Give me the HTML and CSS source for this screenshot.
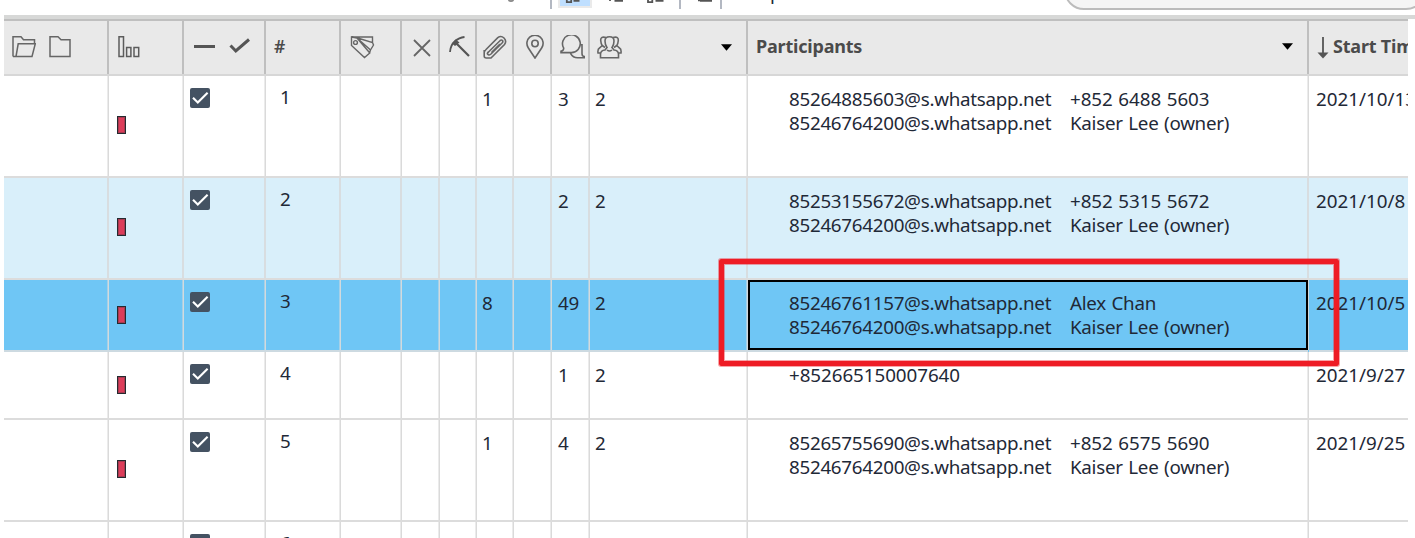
FILE: index.html
```html
<!DOCTYPE html>
<html lang="en">
<head>
<meta charset="utf-8">
<title>Chats</title>
<link rel="stylesheet" href="styles.css">
</head>
<body>
<svg class="defs" width="0" height="0">
  <symbol id="check" viewBox="0 0 20 20"><rect width="20" height="20" rx="2" fill="#445262"/><path d="M3 9.8 7.8 14.6 17.6 4.8" fill="none" stroke="#fff" stroke-width="2.1"/></symbol>
  <symbol id="caret" viewBox="0 0 11 7"><path d="M0 .3H11L5.5 6.8Z" fill="#000"/></symbol>
</svg>
<div class="window">
  <div class="toolbar">
    <svg class="tools" width="290" height="10" viewBox="490 0 290 10" fill="none" stroke="#555" stroke-width="1.8">
      <path d="M508.500 0Q511 2.200 513.500 0" stroke="#888"/>
      <path d="M551 0V9M680 0V9M721 0V9" stroke="#b3b8c2" stroke-width="2"/>
      <path d="M558 0H592V8H558Z" fill="#eaeaea" stroke="none"/>
      <path d="M560 0H590V6H560Z" fill="#bfdfff" stroke="none"/>
      <path d="M566.800 -1V2.200H571.200V-1M573.500 .9H579.500"/>
      <path d="M610 0V1M614.500 .9H623"/>
      <path d="M648 -1V2.200H652.300V-1M655.500 .9H663.500"/>
      <path d="M698 .3H702M700 .9H712" />
    </svg>
    <span class="tool-text">p</span>
    <div class="search"></div>
  </div>
  <div class="band"></div>
  <div class="table">
    <div class="row head">
      <div class="cell folders">
        <svg width="24" height="22" viewBox="0 0 24 22" fill="none" stroke="#666" stroke-width="1.500"><path d="M1 20.500V.8H9L11.500 3.700H22.500V8M1 20.500H20L23.300 7.800H6.200L4 20.500"/></svg>
        <svg width="22" height="22" viewBox="0 0 22 22" fill="none" stroke="#666" stroke-width="1.500"><path d="M1 .8H9L12 3.700H21V20.500H1Z"/></svg>
      </div>
      <div class="cell bars"><svg width="22" height="22" viewBox="0 0 22 22" fill="none" stroke="#5c5c5c" stroke-width="1.500"><path d="M1 .8H5.500V20.500H1ZM8.600 11.500H12.900V20.500H8.600ZM16 11.500H20.700V20.500H16Z"/></svg></div>
      <div class="cell marks"><svg width="56" height="16" viewBox="0 0 56 16" fill="none" stroke="#555" stroke-width="3"><path d="M0 8.500H21M36.500 7.500 41.800 13 55 1.500"/></svg></div>
      <div class="cell num">#</div>
      <div class="cell tag"><svg width="26" height="24" viewBox="0 0 26 24" fill="none" stroke="#666" stroke-width="1.400"><path d="M2.500 2H23.500V8M7 2.500 23.500 7.500 24.500 10 21.500 15M8 3 21.500 15 20.500 18M2.500 2V10.500L15.500 22.500 20.800 18 8 3Z"/><circle cx="6.500" cy="7.500" r="1.900"/></svg></div>
      <div class="cell cross"><svg width="18" height="18" viewBox="0 0 18 18" fill="none" stroke="#666" stroke-width="1.800"><path d="M1 1 17 17M17 1 1 17"/></svg></div>
      <div class="cell pick"><svg width="21" height="21" viewBox="0 0 21 21" fill="none" stroke="#555"><path d="M1 16Q1.500 9 6 5.300 10 1.500 15.500 1" stroke-width="1.800"/><path d="M5.500 5.500 20 20" stroke-width="2.200"/><path d="M3 7.500 6.500 3.200 10.500 6.500 6 10Z" fill="#555" stroke="none"/></svg></div>
      <div class="cell clip"><svg width="24" height="24" viewBox="0 0 24 24" fill="none" stroke="#666" stroke-width="1.600"><path d="M1.200 15V21Q1.200 23 3.300 23H8L21.500 9.500Q24 6 21 3 18 .2 14.800 2.600L3.500 14Q1 16.500 1.200 18M5.500 17 17.200 5.500Q18.500 4.500 19.500 5.500 20.300 6.600 19.300 7.700L8 19Q6 20.800 4.700 19.300 3.800 18.300 5.500 17ZM8.500 17.500 17 9"/></svg></div>
      <div class="cell pin"><svg width="18" height="24" viewBox="0 0 18 24" fill="none" stroke="#666" stroke-width="1.600"><path d="M9 23Q5 17 2.200 12.700A8.100 8.100 0 1 1 15.800 12.700Q13 17 9 23Z"/><circle cx="9" cy="8.500" r="3.200"/></svg></div>
      <div class="cell chat"><svg width="25" height="24" viewBox="0 0 25 24" fill="none" stroke="#666" stroke-width="1.600"><path d="M3.700 13.200A8.900 8.900 0 1 1 11.300 17.600H1V16.200Q3.700 15.500 3.700 13.200ZM19.600 9.800H22V18.500Q22 21.500 24.300 21.500V22.800H17.500Q13 22.800 10.500 18.300"/></svg></div>
      <div class="cell people"><svg width="25" height="24" viewBox="0 0 25 24" fill="none" stroke="#666" stroke-width="1.600"><path d="M8 6Q8 1.800 12.500 1.800T17 6Q17 10 15 12.500L17 15Q21.300 15.500 21.500 19V22.800H3.500V19Q3.700 15.500 8 15L10 12.500Q8 10 8 6ZM9 2.500Q3 1 3.800 6 4 9 5.200 10.500L2.500 13Q.5 14 1 18H3.500M16 2.500Q22 1 21.200 6 21 9 19.800 10.500L22.500 13Q24.500 14 24 18H21.500M10 15Q12.500 17 15 15M5.200 10.500 8 12.500M19.800 10.500 17 12.500"/></svg><svg class="caret" width="11" height="7"><use href="#caret"/></svg></div>
      <div class="cell parts"><span>Participants</span><svg class="caret" width="11" height="7"><use href="#caret"/></svg></div>
      <div class="cell time"><svg width="12" height="22" viewBox="0 0 12 22"><path d="M6 0V17" stroke="#555" stroke-width="1.800"/><path d="M.5 15.500H11.500L6 21.500Z" fill="#555"/></svg><span>Start Time</span></div>
    </div>

    <div class="row tall">
      <div class="cell"></div><div class="cell mark"><i></i></div><div class="cell box"><svg width="20" height="20"><use href="#check"/></svg></div><div class="cell num">1</div><div class="cell"></div><div class="cell"></div><div class="cell"></div><div class="cell n">1</div><div class="cell"></div><div class="cell c">3</div><div class="cell n">2</div>
      <div class="cell people-list"><span class="id">85264885603@s.whatsapp.net</span><span class="phone">+852 6488 5603</span><span class="id">85246764200@s.whatsapp.net</span><span class="name">Kaiser Lee (owner)</span></div>
      <div class="cell date">2021/10/13</div>
    </div>
    <div class="row tall alt">
      <div class="cell"></div><div class="cell mark"><i></i></div><div class="cell box"><svg width="20" height="20"><use href="#check"/></svg></div><div class="cell num">2</div><div class="cell"></div><div class="cell"></div><div class="cell"></div><div class="cell"></div><div class="cell"></div><div class="cell c">2</div><div class="cell n">2</div>
      <div class="cell people-list"><span class="id">85253155672@s.whatsapp.net</span><span class="phone">+852 5315 5672</span><span class="id">85246764200@s.whatsapp.net</span><span class="name">Kaiser Lee (owner)</span></div>
      <div class="cell date">2021/10/8</div>
    </div>
    <div class="row medium selected">
      <div class="cell"></div><div class="cell mark"><i></i></div><div class="cell box"><svg width="20" height="20"><use href="#check"/></svg></div><div class="cell num">3</div><div class="cell"></div><div class="cell"></div><div class="cell"></div><div class="cell n">8</div><div class="cell"></div><div class="cell c">49</div><div class="cell n">2</div>
      <div class="cell people-list focus"><span class="id">85246761157@s.whatsapp.net</span><span class="name">Alex Chan</span><span class="id">85246764200@s.whatsapp.net</span><span class="name">Kaiser Lee (owner)</span></div>
      <div class="cell date">2021/10/5</div>
    </div>
    <div class="row short">
      <div class="cell"></div><div class="cell mark"><i></i></div><div class="cell box"><svg width="20" height="20"><use href="#check"/></svg></div><div class="cell num">4</div><div class="cell"></div><div class="cell"></div><div class="cell"></div><div class="cell"></div><div class="cell"></div><div class="cell c">1</div><div class="cell n">2</div>
      <div class="cell people-list"><span class="phone">+852665150007640</span></div>
      <div class="cell date">2021/9/27</div>
    </div>
    <div class="row tall">
      <div class="cell"></div><div class="cell mark"><i></i></div><div class="cell box"><svg width="20" height="20"><use href="#check"/></svg></div><div class="cell num">5</div><div class="cell"></div><div class="cell"></div><div class="cell"></div><div class="cell n">1</div><div class="cell"></div><div class="cell c">4</div><div class="cell n">2</div>
      <div class="cell people-list"><span class="id">85265755690@s.whatsapp.net</span><span class="phone">+852 6575 5690</span><span class="id">85246764200@s.whatsapp.net</span><span class="name">Kaiser Lee (owner)</span></div>
      <div class="cell date">2021/9/25</div>
    </div>
    <div class="row tall">
      <div class="cell"></div><div class="cell"></div><div class="cell box"><svg width="20" height="20"><use href="#check"/></svg></div><div class="cell num">6</div><div class="cell"></div><div class="cell"></div><div class="cell"></div><div class="cell"></div><div class="cell"></div><div class="cell"></div><div class="cell"></div><div class="cell"></div><div class="cell"></div>
    </div>
  </div>
  <div class="highlight"></div>
</div>
</body>
</html>
```

FILE: styles.css
```css
* { box-sizing: border-box; }
body { margin: 0; background: #fff; }
.defs { position: absolute; }
.window {
  position: relative;
  width: 1415px;
  height: 538px;
  overflow: hidden;
  font: 18.8px/24px "Noto Sans", "Open Sans", sans-serif;
  letter-spacing: -0.28px;
  color: #1f2937;
}
.toolbar { display: flex; height: 15px; padding-left: 490px; overflow: hidden; }
.tools { flex: none; }
.tool-text { flex: none; margin: -17px 0 0 -10px; width: 12px; line-height: 20px; }
.search {
  flex: none;
  width: 362px;
  height: 40px;
  margin: -30px 0 0 282px;
  border: 2px solid #bcbcbc;
  border-radius: 20px;
  background: #f5f5f5;
}
.band { height: 4px; margin-left: 4px; background: #d7d8d7; }
.table { width: 1404px; margin-left: 4px; overflow: hidden; }
.row {
  display: grid;
  grid-template-columns: 105px 75px 82px 75px 61px 38px 37px 37px 38px 38px 158px 561px 99px;
  overflow: hidden;
}
.cell {
  min-width: 0;
  border-bottom: 2px solid #dcdcdc;
  box-shadow: inset -1px 0 #dadada, inset -2px 0 #ebebeb;
  white-space: nowrap;
}
.row > .cell:last-child { box-shadow: none; }
.tall { height: 102px; }
.medium { height: 72px; }
.short { height: 68px; }
.alt { background: #d9effa; }
.selected { background: #6fc6f5; }
.alt .cell { box-shadow: inset -2px 0 #d8dde0; }
.selected .cell { border-bottom-color: #cddae1; box-shadow: inset -1px 0 #d2dadd, inset -2px 0 #a5d0e8; }

.head {
  height: 57px;
  border-top: 2px solid #bfbfbf;
  background: #e9e9e9;
  color: #4b4b4b;
  font-weight: 700;
  font-size: 18px;
  letter-spacing: -0.2px;
}
.head .cell {
  display: flex;
  align-items: center;
  border-bottom-color: #d7d7d7;
  box-shadow: inset -2px 0 #bfbfbf;
}
.head .cell svg { flex: none; }
.head .folders { gap: 13px; padding: 0 0 1px 8px; }
.head .bars { padding: 0 0 1px 9px; }
.head .marks { padding: 0 0 3px 10px; }
.head .num { padding: 0 0 4px 8px; font-size: 17.5px; font-weight: 600; }
.head .tag { padding: 0 0 1px 8px; }
.head .cross { padding-left: 11px; }
.head .pick { padding: 0 0 2px 9px; }
.head .clip { padding: 0 0 1px 6px; }
.head .pin { padding: 0 0 1px 12px; }
.head .chat { padding: 0 0 1px 8px; }
.head .people { padding: 0 16px 1px 7px; }
.head .parts { padding: 0 16px 3px 8px; }
.caret { margin-left: auto; }
.head .time { gap: 4px; padding: 0 0 0 8px; }
.head .time span { margin-top: -3px; }

.mark { display: flex; align-items: center; padding-left: 8px; }
.tall .mark { padding-bottom: 2px; }
.mark i { width: 9px; height: 18px; border: 1px solid #252a30; background: #dc3d5a; box-shadow: inset 0 0 0 1px #a83a50; }
.box { padding: 12px 0 0 6px; }
.box svg { display: block; }
.num { padding: 9px 0 0 14px; }
.n { padding: 11px 0 0 5px; }
.c { padding: 11px 0 0 6px; }
.people-list {
  display: grid;
  grid-template-columns: 281px 1fr;
  grid-auto-rows: 24px;
  padding: 11px 0 0 41px;
}
.phone { letter-spacing: -0.06px; word-spacing: 0.8px; }
.name { word-spacing: 1px; }
.selected .focus {
  padding: 9px 0 0 39px;
  border: 2px solid #000;
  height: 70px;
  margin-right: 1px;
  box-shadow: 0 2px #cddae1, 1px 0 #d2dadd;
}
.date { padding: 11px 0 0 7px; overflow: hidden; letter-spacing: 0; }

/* Marker frame drawn over the selected participants. */
.highlight {
  position: absolute;
  left: 719px;
  top: 259px;
  width: 620px;
  height: 107px;
  border: 5px solid #ee1c25;
  border-radius: 2px;
  box-shadow: 0 0 0 1px rgba(238, 28, 37, .4), inset 0 0 0 1px rgba(238, 28, 37, .4);
}
```
